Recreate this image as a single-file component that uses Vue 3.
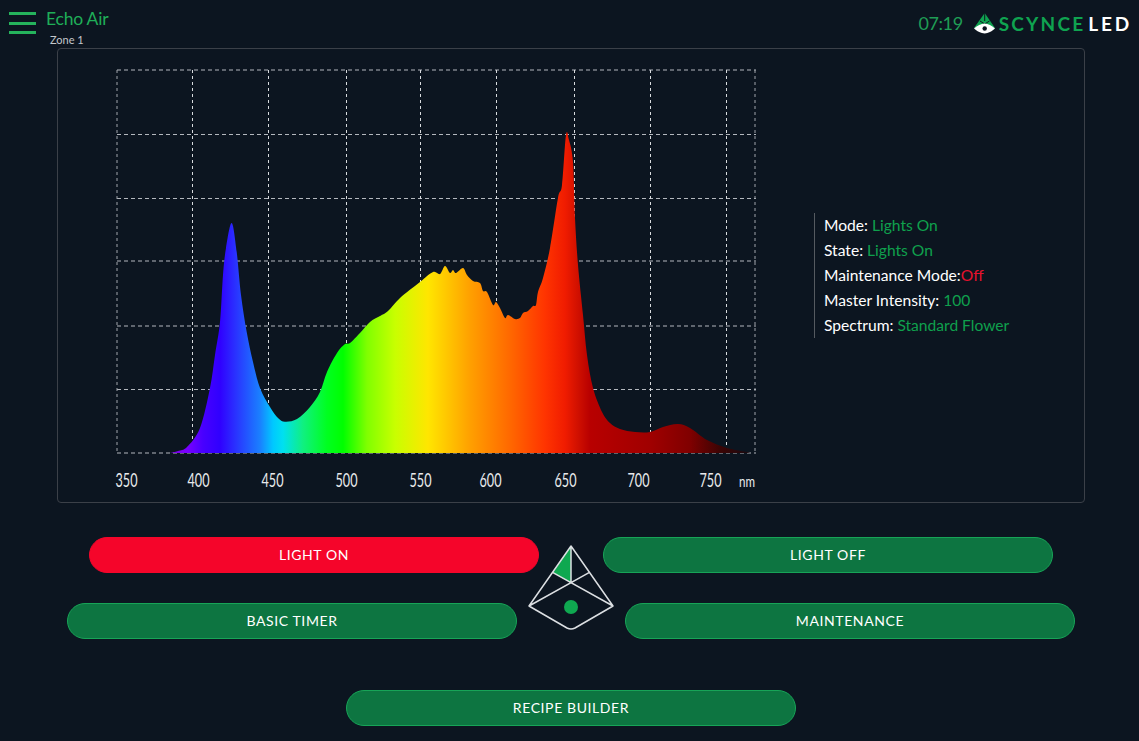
<template>
  <div class="page">
    <header class="topbar">
      <div class="title-wrap">
        <div class="burger"><span></span><span></span><span></span></div>
        <div class="titles">
          <div class="device">Echo Air</div>
          <div class="zone">Zone 1</div>
        </div>
      </div>
      <div class="brand">
        <span class="clock">07:19</span>
        <svg class="logo" width="22" height="23" viewBox="975 13 22 23">
          <polygon points="985.7,14 975,29 996,29" fill="#0fa350" />
          <path d="M985.7 14V22M981 22L985.7 25L990.5 22" fill="none" stroke="#0c1520" stroke-width="1" />
          <path d="M975 29.5Q980 25 985.7 24.5Q991 25 996 29.5Q991 34 985.7 34.5Q980 34 975 29.5Z" fill="#fff" />
          <circle cx="985.7" cy="29.5" r="2.2" fill="#0c1520" />
        </svg>
        <span class="brand-name">SCYNCE<span class="brand-led">LED</span></span>
      </div>
    </header>

    <section class="panel">
      <svg class="chart" width="740" height="453" viewBox="58 49 740 453">
        <defs>
          <linearGradient id="spectrum" gradientUnits="userSpaceOnUse" x1="170" y1="0" x2="750" y2="0">
            <stop v-for="s in stops" :key="s.x" :offset="(s.x - 170) / 580" :stop-color="s.c" />
          </linearGradient>
        </defs>
        <line v-for="y in gridY" :key="'h' + y" x1="117" x2="756" :y1="y" :y2="y" class="grid" />
        <line v-for="x in gridX" :key="'v' + x" :x1="x" :x2="x" y1="70" y2="453" class="grid bright" />
        <line x1="117" x2="117" y1="70" y2="453" class="grid edge" />
        <line x1="755" x2="755" y1="70" y2="453" class="grid edge" />
        <path :d="curve" fill="url(#spectrum)" />
        <text
          v-for="l in labels"
          :key="l.t"
          :x="l.x"
          y="487"
          class="axis"
          textLength="22"
          lengthAdjust="spacingAndGlyphs"
        >{{ l.t }}</text>
        <text x="739" y="487" class="axis unit" textLength="16" lengthAdjust="spacingAndGlyphs">nm</text>
      </svg>
      <ul class="status">
        <li>Mode: <b class="on">Lights On</b></li>
        <li>State: <b class="on">Lights On</b></li>
        <li>Maintenance Mode:<b class="off">Off</b></li>
        <li>Master Intensity: <b class="on">100</b></li>
        <li>Spectrum: <b class="on">Standard Flower</b></li>
      </ul>
    </section>

    <section class="controls">
      <div class="row narrow">
        <button class="btn red">LIGHT ON</button>
        <button class="btn">LIGHT OFF</button>
      </div>
      <div class="row wide">
        <button class="btn">BASIC TIMER</button>
        <button class="btn">MAINTENANCE</button>
      </div>
      <svg class="pyramid" width="90" height="90" viewBox="526 543 90 90">
        <polygon points="571,546 553,572.7 571,582.7" fill="#0fa850" />
        <path
          d="M571 546L529 606L567 628Q571 630 575 628L613 606ZM571 546V582.7M529 606L589 572.7M613 606L553 572.7"
          fill="none"
          stroke="#dcdfe2"
          stroke-width="1.5"
          stroke-linejoin="round"
        />
        <circle cx="571" cy="607" r="7" fill="#0fa850" />
      </svg>
      <div class="row single">
        <button class="btn">RECIPE BUILDER</button>
      </div>
    </section>
  </div>
</template>

<script setup>
const gridX = [192.5, 268.5, 346.5, 420.5, 496.5, 574.5, 650.5, 726.5]
const gridY = [70, 134.5, 198.5, 261, 326, 389.5, 453]

const labels = [
  { t: '350', x: 115.5 }, { t: '400', x: 187.5 }, { t: '450', x: 261.5 }, { t: '500', x: 335.5 },
  { t: '550', x: 409.5 }, { t: '600', x: 479.5 }, { t: '650', x: 554.5 }, { t: '700', x: 627.5 },
  { t: '750', x: 699.5 },
]

const stops = [
  { x: 170, c: '#7a00e0' }, { x: 187, c: '#7a00ff' }, { x: 203, c: '#4800ff' }, { x: 220, c: '#3000ff' },
  { x: 235, c: '#2a30ff' }, { x: 260, c: '#1a80ff' }, { x: 273, c: '#00c8ff' }, { x: 283, c: '#00e0f0' },
  { x: 303, c: '#10f080' }, { x: 327, c: '#00ff20' }, { x: 343, c: '#00ff00' }, { x: 367, c: '#80ff00' },
  { x: 395, c: '#c8ff00' }, { x: 428, c: '#ffe600' }, { x: 470, c: '#ffa000' }, { x: 510, c: '#ff6800' },
  { x: 545, c: '#ff3400' }, { x: 565, c: '#f01c00' }, { x: 578, c: '#d01000' }, { x: 590, c: '#b80000' },
  { x: 650, c: '#a00000' }, { x: 690, c: '#800000' }, { x: 720, c: '#3c0404' }, { x: 750, c: '#1a0a10' },
]

// outline of the spectrum in page coordinates
const points = [
  [170, 453], [178, 451], [187, 447], [200, 428], [210, 388], [215, 355], [220, 322], [223, 275], [226, 248],
  [231.7, 223], [236.7, 252], [241, 295], [246.7, 332], [253, 362], [260, 388], [270, 407], [278, 418],
  [285, 421.7], [297, 419], [310, 407], [320, 392], [327, 372], [337, 353], [345, 344], [350, 343],
  [360, 333], [370, 322], [380, 316], [388, 311], [400, 298], [420, 282], [433, 272],
  [440, 274], [445, 266], [450, 273], [453, 270], [456, 273], [463, 268], [467, 275], [473, 281],
  [480, 283], [483, 291], [487, 292], [493, 305], [496, 302], [500, 308], [505, 318], [508, 315],
  [515, 319], [520, 318], [523, 313], [528, 311], [533, 306], [536, 305], [538, 292], [543, 278],
  [550, 248], [558, 198], [562, 185], [566, 135], [569, 140], [573, 162], [575, 218], [578, 265],
  [583, 315], [587, 355], [593, 388], [602, 412], [610, 423], [620, 429], [635, 432],
  [650, 432], [663, 427], [678, 424], [690, 428], [707, 440], [727, 448], [747, 452], [750, 453],
]

// catmull-rom through the points so the flanks don't look faceted
function smooth(pts) {
  let d = `M${pts[0][0]} ${pts[0][1]}`
  for (let i = 0; i < pts.length - 1; i++) {
    const p0 = pts[Math.max(i - 1, 0)]
    const p1 = pts[i]
    const p2 = pts[i + 1]
    const p3 = pts[Math.min(i + 2, pts.length - 1)]
    const c1x = p1[0] + (p2[0] - p0[0]) / 6
    const c1y = p1[1] + (p2[1] - p0[1]) / 6
    const c2x = p2[0] - (p3[0] - p1[0]) / 6
    const c2y = p2[1] - (p3[1] - p1[1]) / 6
    d += `C${c1x} ${c1y} ${c2x} ${c2y} ${p2[0]} ${p2[1]}`
  }
  return d + 'Z'
}

const curve = smooth(points)
</script>

<style>
html,
body {
  background: #0c1520;
}
</style>

<style scoped>
.page {
  width: 1139px;
  height: 741px;
  overflow: hidden;
  background: #0c1520;
  font-family: Lato, "Open Sans", sans-serif;
  color: #fff;
}

.topbar {
  display: flex;
  justify-content: space-between;
  height: 48px;
}

.title-wrap {
  display: flex;
  padding: 12px 0 0 9px;
}

.burger {
  display: flex;
  flex-direction: column;
  gap: 6.5px;
  width: 27px;
}

.burger span {
  height: 3px;
  background: #25b35c;
}

.titles {
  margin-left: 10px;
}

.device {
  margin-top: -3px;
  font-size: 17.5px;
  letter-spacing: -0.2px;
  line-height: 20px;
  color: #1fae58;
}

.zone {
  margin: 4px 0 0 4px;
  font-size: 11px;
  line-height: 13px;
  color: #c4c7cb;
}

.brand {
  display: flex;
  align-items: center;
  height: 48px;
  padding: 0 7px 0 0;
  margin-top: -1px;
}

.clock {
  margin-right: 11px;
  font-size: 18px;
  letter-spacing: -0.4px;
  color: #1f9d55;
}

.logo {
  margin-right: 3px;
}

.brand-name {
  font-size: 19px;
  font-weight: 700;
  letter-spacing: 2.2px;
  color: #0fa350;
}

.brand-led {
  margin-left: 3px;
  letter-spacing: 2.8px;
  color: #fff;
}

.panel {
  display: flex;
  align-items: center;
  width: 1028px;
  height: 455px;
  margin-left: 57px;
  box-sizing: border-box;
  border: 1px solid #3b4048;
  border-radius: 4px;
}

.chart {
  display: block;
  flex: none;
}

.grid {
  stroke: #b4b8be;
  stroke-width: 1;
  stroke-dasharray: 4 3;
}

.grid.bright {
  stroke: #d8dbde;
  stroke-dasharray: 3 3;
}

.grid.edge {
  stroke: #a0a5ab;
  stroke-dasharray: 3 3;
}

.axis {
  font-size: 19px;
  fill: #e8eaec;
}

.axis.unit {
  font-size: 15px;
}

.status {
  list-style: none;
  height: 125px;
  box-sizing: border-box;
  margin: 0 0 0 16px;
  padding: 0 0 0 9px;
  border-left: 1px solid #555a60;
  font-size: 15.6px;
  line-height: 25px;
}

.status b {
  font-weight: 400;
}

.on {
  color: #0fa04d;
}

.off {
  color: #e8112d;
}

.controls {
  position: relative;
  padding: 34px 0 0 3px;
}

.row {
  display: flex;
  justify-content: center;
}

.narrow {
  gap: 64px;
}

.wide {
  gap: 108px;
  margin-top: 30px;
}

.single {
  margin-top: 51px;
}

.btn {
  width: 450px;
  height: 36px;
  padding: 0 0 2px;
  box-sizing: border-box;
  border: 1px solid #17a457;
  border-radius: 18px;
  background: #0d7541;
  color: #fff;
  font-family: inherit;
  font-size: 14px;
  letter-spacing: 0.6px;
}

.btn.red {
  border-color: #f5052a;
  background: #f5052a;
}

.pyramid {
  position: absolute;
  left: 526px;
  top: 40px;
}
</style>
